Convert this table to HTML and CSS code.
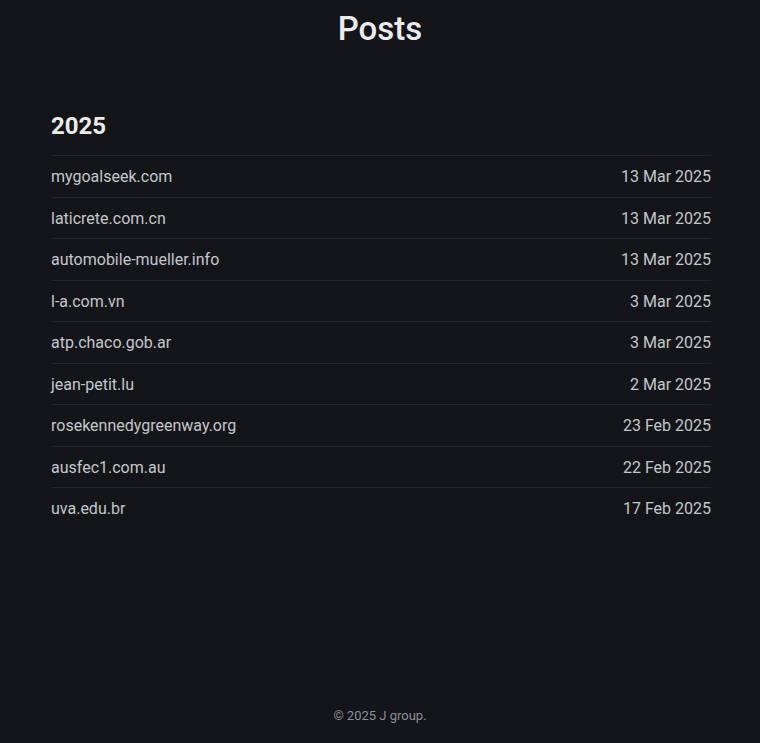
FILE: index.html
```html
<!DOCTYPE html>
<html lang="en">
<head>
  <meta charset="UTF-8" />
  <meta name="viewport" content="width=device-width, initial-scale=1.0" />
  <title>Posts</title>
  <link rel="stylesheet" href="styles.css">
</head>
<body>

  <div class="page">
    <header class="top">
      <h1>Posts</h1>
    </header>

    <main class="content">
      <section class="year">
        <h2>2025</h2>
        <ul class="post-list">
          <li><a href="#">mygoalseek.com</a><span class="date">13 Mar 2025</span></li>
          <li><a href="#">laticrete.com.cn</a><span class="date">13 Mar 2025</span></li>
          <li><a href="#">automobile-mueller.info</a><span class="date">13 Mar 2025</span></li>
          <li><a href="#">l-a.com.vn</a><span class="date">3 Mar 2025</span></li>
          <li><a href="#">atp.chaco.gob.ar</a><span class="date">3 Mar 2025</span></li>
          <li><a href="#">jean-petit.lu</a><span class="date">2 Mar 2025</span></li>
          <li><a href="#">rosekennedygreenway.org</a><span class="date">23 Feb 2025</span></li>
          <li><a href="#">ausfec1.com.au</a><span class="date">22 Feb 2025</span></li>
          <li><a href="#">uva.edu.br</a><span class="date">17 Feb 2025</span></li>
        </ul>
      </section>
    </main>

    <footer class="footer">&copy; 2025 J group.</footer>
  </div>

</body>
</html>
```

FILE: styles.css
```css
:root {
  --bg: #131518;
  --line: #23262b;
  --title: #ebebeb;
  --text: #c4c7cc;
  --muted: #8b8f96;
}

* {
  margin: 0;
  padding: 0;
  box-sizing: border-box;
}

html,
body {
  width: 100%;
  height: 100%;
  background: var(--bg);
  color: var(--text);
  font-family: Roboto, "Liberation Sans", sans-serif;
}

.page {
  min-height: 100vh;
  display: flex;
  flex-direction: column;
}

.top {
  padding-top: 9px;
  text-align: center;
}

.top h1 {
  font-size: 33px;
  font-weight: 500;
  line-height: 40px;
  color: var(--title);
}

.content {
  flex: 1;
  padding: 62px 49px 0 51px;
}

.year h2 {
  font-size: 24px;
  font-weight: 700;
  line-height: 30px;
  color: var(--title);
  margin-bottom: 14px;
}

.post-list {
  list-style: none;
}

.post-list li {
  display: flex;
  justify-content: space-between;
  align-items: center;
  border-top: 1px solid var(--line);
  padding: 11px 0 9px;
  font-size: 16px;
  line-height: 20.5px;
}

.post-list a {
  color: var(--text);
  text-decoration: none;
}

.date {
  color: var(--text);
}

.footer {
  text-align: center;
  font-size: 13px;
  color: var(--muted);
  padding-bottom: 20px;
}
```
